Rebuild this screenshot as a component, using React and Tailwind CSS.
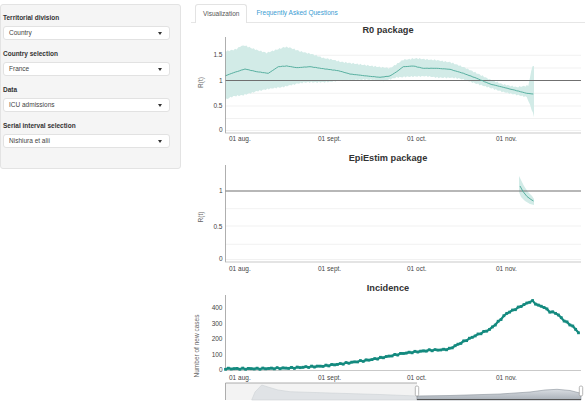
import React from "react";

const FONT = { fontFamily: '"Liberation Sans", Arial, Helvetica, sans-serif' };

function densify(arr, step, amp, seed) {
  const out = [];
  for (let i = 0; i < arr.length - 1; i++) {
    const [x0, y0] = arr[i];
    const [x1, y1] = arr[i + 1];
    const d = Math.max(1, Math.round(Math.abs(x1 - x0) / step));
    for (let k = 0; k < d; k++) {
      const t = k / d;
      const x = x0 + (x1 - x0) * t;
      const n = amp * (Math.sin(x * 1.7 + seed) * 0.6 + Math.sin(x * 4.3 + seed * 2) * 0.4);
      out.push([x, y0 + (y1 - y0) * t + n]);
    }
  }
  out.push(arr[arr.length - 1]);
  return out;
}
const P = (a) => a.map((p) => `${p[0].toFixed(1)},${p[1].toFixed(1)}`).join(" ");

const r0Line = [[225,76],[231.7,73.3],[245,69],[256.7,71.7],[268.3,73.3],[278.3,66.7],[286.7,66],[296.7,67.7],[310,66.7],[323.3,68.7],[338.3,70.7],[350,74],[366.7,76],[380,77.3],[390,76],[396.7,71.7],[403.3,66.7],[413.3,66],[423.3,68.3],[436.7,68.3],[450,69.3],[463.3,73.3],[476.7,78.3],[490,84],[503.3,87.3],[516.7,90.7],[526.7,93.3],[533.3,94]];
const r0Up = [[225,50.7],[233.3,50],[240,46.7],[245,45.7],[256.7,50],[266.7,53.3],[276.7,50],[285,46.7],[290,48.3],[300,51.7],[313.3,55],[323.3,58.3],[340,61.7],[363.3,65],[390,67.7],[403.3,59.3],[416.7,58.3],[430,60],[450,61.7],[463.3,66.7],[476.7,73.3],[490,80],[503.3,85],[516.7,87.3],[528.3,86],[532.5,66],[534,66]];
const r0Low = [[225,100],[233.3,96.7],[243.3,95],[256.7,91.7],[273.3,88.3],[290,85],[306.7,82.7],[323.3,81.7],[340,81],[363.3,80],[383.3,80.3],[396.7,77.3],[410,76.7],[423.3,76.7],[443.3,77.3],[463.3,79.3],[476.7,83.3],[490,87.3],[503.3,91.7],[516.7,95],[526.7,96.7],[531.7,110],[534,117]];

const incCtrl = [[225,368.7],[256.7,368.7],[290,368],[323.3,366],[340,364],[356.7,361.7],[373.3,359.3],[390,356],[403.3,353.3],[416.7,351.7],[430,350.3],[443.3,349.7],[450,348.7],[456.7,345],[466.7,340],[476.7,335],[490,329.3],[496.7,323.3],[506.7,313.3],[515,309.3],[523.3,305],[530,301.7],[533.3,301],[536.7,305],[543.3,306.7],[550,311.7],[556.7,313.3],[563.3,320],[573.3,326.7],[580.7,335]];

function interp(ctrl, x) {
  for (let i = 0; i < ctrl.length - 1; i++) {
    if (x >= ctrl[i][0] && x <= ctrl[i + 1][0]) {
      const t = (x - ctrl[i][0]) / (ctrl[i + 1][0] - ctrl[i][0] || 1);
      return ctrl[i][1] + (ctrl[i + 1][1] - ctrl[i][1]) * t;
    }
  }
  return ctrl[ctrl.length - 1][1];
}
const incPts = [];
for (let x = 225.5; x <= 581; x += 2.87) {
  const j = Math.sin(x * 3.1) * 0.6;
  incPts.push([x, interp(incCtrl, x) + j]);
}

function XLabels({ y }) {
  return (
    <g style={FONT}>
      <text x="229" y={y} fontSize="6.5" fill="#444">01 aug.</text>
      <text x="318" y={y} fontSize="6.5" fill="#444">01 sept.</text>
      <text x="407" y={y} fontSize="6.5" fill="#444">01 oct.</text>
      <text x="496" y={y} fontSize="6.5" fill="#444">01 nov.</text>
    </g>
  );
}

function YLabel({ x, y, text }) {
  return (
    <text x={x} y={y} transform={`rotate(-90 ${x} ${y})`} textAnchor="middle" dominantBaseline="middle" fontSize="6.5" fill="#666" style={FONT}>
      {text}
    </text>
  );
}

function Ticks({ items }) {
  return (
    <g>
      {items.map(([label, y]) => (
        <text key={label} x="222.5" y={y + 2.3} textAnchor="end" fontSize="6.5" fill="#444" style={FONT}>
          {label}
        </text>
      ))}
    </g>
  );
}

function Grid({ ys }) {
  return (
    <g>
      {ys.map((y) => (
        <line key={y} x1="225" x2="581" y1={y} y2={y} stroke="#eeeeee" strokeWidth="0.8" />
      ))}
    </g>
  );
}

function R0Chart() {
  const up = densify(r0Up, 1.5, 1.2, 1);
  const low = densify(r0Low, 1.5, 1.2, 3);
  const line = densify(r0Line, 2, 0.15, 2);
  return (
    <svg width="394" height="114" viewBox="191 37 394 114" className="block">
      <Grid ys={[55.3, 68, 93.3, 106, 118.5, 130.5]} />
      <polygon points={P([...up, ...low.slice().reverse()])} fill="#d2ebe7" />
      <line x1="225" x2="581" y1="80.5" y2="80.5" stroke="#707070" strokeWidth="1.1" />
      <polyline points={P(line)} fill="none" stroke="#4aa897" strokeWidth="0.9" />
      <line x1="225.5" x2="225.5" y1="36" y2="133" stroke="#9a9a9a" strokeWidth="0.8" />
      <line x1="225" x2="581" y1="133" y2="133" stroke="#bbb" strokeWidth="0.8" />
      <Ticks items={[["1.5", 55], ["1", 80.5], ["0.5", 106], ["0", 130]]} />
      <XLabels y={140.5} />
      <YLabel x={201.7} y={82.5} text="R(t)" />
    </svg>
  );
}

function EpiChart() {
  return (
    <svg width="394" height="116" viewBox="191 165 394 116" className="block">
      <Grid ys={[208.7, 226, 244.3, 259.5]} />
      <polygon points="519,176 521,180 524,186 528,192 532,196 534,199 534,205 530,204 525,201 521,197 519,192" fill="#d2ebe7" />
      <line x1="225" x2="581" y1="191" y2="191" stroke="#707070" strokeWidth="1.1" />
      <polyline points="520,186 523,191.5 527,196.5 531,199.5 533.5,201" fill="none" stroke="#4aa897" strokeWidth="0.9" />
      <line x1="225.5" x2="225.5" y1="165" y2="262" stroke="#9a9a9a" strokeWidth="0.8" />
      <line x1="225" x2="581" y1="262" y2="262" stroke="#bbb" strokeWidth="0.8" />
      <Ticks items={[["1", 191], ["0.5", 226.5], ["0", 259]]} />
      <XLabels y={270.5} />
      <YLabel x={201.7} y={217} text="R(t)" />
    </svg>
  );
}

function IncChart() {
  return (
    <svg width="394" height="109" viewBox="191 295 394 109" className="block">
      <defs>
        <linearGradient id="rsg" x1="0" y1="0" x2="0" y2="1">
          <stop offset="0" stopColor="#d9dde2" />
          <stop offset="1" stopColor="#a9b0b8" />
        </linearGradient>
      </defs>
      <line x1="225.5" x2="225.5" y1="295" y2="370" stroke="#9a9a9a" strokeWidth="0.8" />
      <line x1="225" x2="581" y1="370.5" y2="370.5" stroke="#bbb" strokeWidth="0.8" />
      <polyline points={P(incPts)} fill="none" stroke="#148a7f" strokeWidth="2.2" />
      {incPts.map(([x, y], i) => (
        <rect key={i} x={x - 1.4} y={y - 1.4} width="2.8" height="2.8" fill="#148a7f" />
      ))}
      <Ticks items={[["400", 308], ["300", 323.5], ["200", 339], ["100", 355], ["0", 370]]} />
      <XLabels y={379.5} />
      <YLabel x={197.5} y={346} text="Number of new cases" />
      <rect x="225" y="383" width="192" height="17" fill="#f3f3f3" />
      <path d="M251.7 400 L255 392 L261.7 385 L268 387 L278 390 L290 391.7 L330 393 L380 394.5 L417 396 L417 400 Z" fill="#e0e3e6" stroke="#cdd1d5" strokeWidth="0.6" />
      <path d="M417 396 L450 395.5 L500 394 L530 392 L545 390 L557 389.3 L570 390.5 L581 393.3 L581 400 L417 400 Z" fill="url(#rsg)" stroke="#8a929b" strokeWidth="0.6" />
      <polyline points="417,383 225.5,383 225.5,400" fill="none" stroke="#9a9a9a" strokeWidth="0.8" />
      <line x1="417" x2="581" y1="399.5" y2="399.5" stroke="#555" strokeWidth="1" />
      <rect x="415.3" y="386" width="3.4" height="10" rx="1.5" fill="#fff" stroke="#888" strokeWidth="0.6" />
      <rect x="579.3" y="386" width="3.4" height="10" rx="1.5" fill="#fff" stroke="#888" strokeWidth="0.6" />
    </svg>
  );
}

function Field({ label, value }) {
  return (
    <div className="flex flex-col">
      <div className="text-[6.5px] leading-[9px] font-bold text-[#333]">{label}</div>
      <div className="mt-[4px] h-[14px] w-[167px] bg-white border border-[#e2e2e2] rounded-[3px] flex items-center justify-between pl-[5px] pr-[7px]">
        <span className="text-[6.5px] text-[#444]">{value}</span>
        <span className="w-0 h-0 border-l-[2.5px] border-r-[2.5px] border-t-[3px] border-l-transparent border-r-transparent border-t-[#333]" />
      </div>
    </div>
  );
}

export default function App() {
  return (
    <div className="w-[585px] h-[404px] bg-white overflow-hidden flex" style={FONT}>
      <div className="pt-[4px] w-[181px] shrink-0">
        <div className="bg-[#f5f5f5] border border-[#e3e3e3] rounded-[3px] pl-[2px] pr-[10px] pt-[8px] pb-[20px] flex flex-col gap-[9px]">
          <Field label="Territorial division" value="Country" />
          <Field label="Country selection" value="France" />
          <Field label="Data" value="ICU admissions" />
          <Field label="Serial interval selection" value="Nishiura et alii" />
        </div>
      </div>
      <div className="ml-[10px] w-[394px] flex flex-col">
        <div className="mt-[4px] h-[19px] border-b border-[#e6e6e6] flex pl-[4px]">
          <div className="h-[19px] px-[7px] border border-b-0 border-[#e3e3e3] rounded-t-[3px] bg-white flex items-center text-[6.5px] text-[#555]">
            Visualization
          </div>
          <div className="ml-[2px] h-[18px] px-[7px] flex items-center text-[6.5px] text-[#3a9bd2]">
            Frequently Asked Questions
          </div>
        </div>
        <div className="h-[14px] leading-[14px] text-center text-[9.2px] font-bold text-[#333]">R0 package</div>
        <R0Chart />
        <div className="h-[14px] leading-[14px] text-center text-[9.2px] font-bold text-[#333]">EpiEstim package</div>
        <EpiChart />
        <div className="h-[14px] leading-[14px] text-center text-[9.2px] font-bold text-[#333]">Incidence</div>
        <IncChart />
      </div>
    </div>
  );
}
